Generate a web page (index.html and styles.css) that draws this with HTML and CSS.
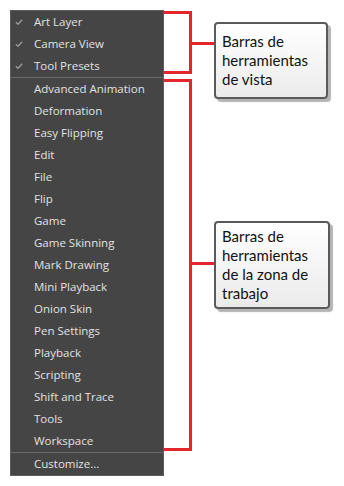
FILE: index.html
```html
<!DOCTYPE html>
<html lang="es">
<head>
  <meta charset="UTF-8" />
  <meta name="viewport" content="width=device-width, initial-scale=1" />
  <title>Barras de herramientas</title>
  <link rel="stylesheet" href="styles.css">
</head>
<body>
  <ul class="menu">
    <li class="item checked"><svg class="check" viewBox="0 0 8 6"><path d="M0.8 3.2 L3 5.2 L7.2 0.8" /></svg>Art Layer</li>
    <li class="item checked"><svg class="check" viewBox="0 0 8 6"><path d="M0.8 3.2 L3 5.2 L7.2 0.8" /></svg>Camera View</li>
    <li class="item checked"><svg class="check" viewBox="0 0 8 6"><path d="M0.8 3.2 L3 5.2 L7.2 0.8" /></svg>Tool Presets</li>
    <li class="sep"></li>
    <li class="item">Advanced Animation</li>
    <li class="item">Deformation</li>
    <li class="item">Easy Flipping</li>
    <li class="item">Edit</li>
    <li class="item">File</li>
    <li class="item">Flip</li>
    <li class="item">Game</li>
    <li class="item">Game Skinning</li>
    <li class="item">Mark Drawing</li>
    <li class="item">Mini Playback</li>
    <li class="item">Onion Skin</li>
    <li class="item">Pen Settings</li>
    <li class="item">Playback</li>
    <li class="item">Scripting</li>
    <li class="item">Shift and Trace</li>
    <li class="item">Tools</li>
    <li class="item">Workspace</li>
    <li class="sep"></li>
    <li class="item">Customize...</li>
  </ul>

  <div class="callouts">
    <div class="callout callout-view">
      <div class="bracket"></div>
      <div class="stub"></div>
      <div class="note">Barras de herramientas de vista</div>
    </div>
    <div class="callout callout-work">
      <div class="bracket"></div>
      <div class="stub"></div>
      <div class="note">Barras de herramientas de la zona de trabajo</div>
    </div>
  </div>
</body>
</html>
```

FILE: styles.css
```css
* {
  box-sizing: border-box;
}
body {
  margin: 0;
  padding: 10px;
  background: #ffffff;
  display: flex;
  align-items: flex-start;
}

/* Menu */
.menu {
  list-style: none;
  margin: 0;
  padding: 0;
  width: 154px;
  background: #454545;
  border: 1px solid #5c5c5c;
  font-family: "Open Sans", "Noto Sans", sans-serif;
  font-size: 11.5px;
  color: #e2e2e2;
}
.item {
  height: 22px;
  line-height: 22px;
  padding-left: 23px;
  position: relative;
  white-space: nowrap;
}
.check {
  position: absolute;
  left: 4px;
  top: 8px;
  width: 8px;
  height: 6px;
  fill: none;
  stroke: #9a9a9a;
  stroke-width: 1.4;
}
.sep {
  height: 1px;
  background: #6a6a6a;
}

/* Callouts */
.callouts {
  display: flex;
  flex-direction: column;
}
.callout {
  display: flex;
  align-items: flex-start;
}
.bracket {
  width: 28px;
  border: 3px solid #e2262b;
  border-left: none;
}
.stub {
  width: 22px;
  height: 3px;
  background: #e2262b;
}
.note {
  display: flex;
  align-items: center;
  padding: 0 6px;
  border: 2px solid #5a5a5a;
  border-radius: 4px;
  background: linear-gradient(#ffffff, #ebebeb);
  box-shadow: 3px 3px 1px #b4b4b4;
  font-family: Lato, "Open Sans", sans-serif;
  font-size: 15px;
  line-height: 19px;
  color: #111111;
}

.callout-view {
  height: 63px;
  margin-top: 1px;
}
.callout-view .bracket {
  height: 63px;
}
.callout-view .stub {
  margin-top: 31px;
}
.callout-view .note {
  margin-top: 11px;
  width: 114px;
  height: 77px;
}

.callout-work {
  margin-top: 5px;
}
.callout-work .bracket {
  height: 372px;
}
.callout-work .stub {
  margin-top: 183px;
}
.callout-work .note {
  margin-top: 142px;
  width: 116px;
  height: 88px;
}
```
